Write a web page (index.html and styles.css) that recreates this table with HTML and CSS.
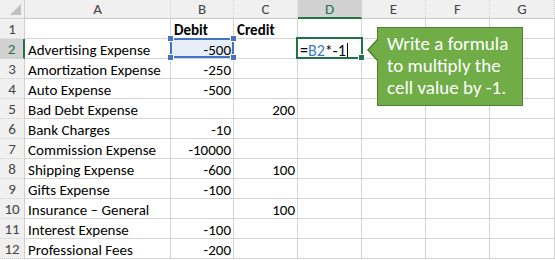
FILE: index.html
```html
<!DOCTYPE html>
<html lang="en">
<head>
  <meta charset="UTF-8" />
  <title>Expenses</title>
  <link rel="stylesheet" href="styles.css">
</head>
<body>

<div class="sheet" id="sheet">
  <div class="corner"></div>
  <div class="colhead">A</div>
  <div class="colhead">B</div>
  <div class="colhead">C</div>
  <div class="colhead active">D</div>
  <div class="colhead">E</div>
  <div class="colhead">F</div>
  <div class="colhead">G</div>
</div>

<!-- Note pointing at the edited cell -->
<div class="callout">Write a formula to multiply the cell value by -1.</div>

<script>
  const rows = [
    ["", "Debit", "Credit"],
    ["Advertising Expense", -500, ""],
    ["Amortization Expense", -250, ""],
    ["Auto Expense", -500, ""],
    ["Bad Debt Expense", "", 200],
    ["Bank Charges", -10, ""],
    ["Commission Expense", -10000, ""],
    ["Shipping Expense", -600, 100],
    ["Gifts Expense", -100, ""],
    ["Insurance – General", "", 100],
    ["Interest Expense", -100, ""],
    ["Professional Fees", -200, ""]
  ];

  const sheet = document.getElementById("sheet");

  function addCell(cls, text){
    const d = document.createElement("div");
    d.className = cls;
    if (text !== undefined && text !== "") d.textContent = text;
    sheet.appendChild(d);
    return d;
  }

  rows.forEach((r, i) => {
    const n = i + 1;
    addCell(n === 2 ? "rowhead active" : "rowhead", n);
    addCell("cell", r[0]);
    if (n === 1){
      addCell("cell bold", r[1]);
      addCell("cell bold", r[2]);
    } else {
      const b = addCell(n === 2 ? "cell num ref" : "cell num", r[1]);
      if (n === 2) ["tl","tr","bl","br"].forEach(c => { const h = document.createElement("span"); h.className = "handle " + c; b.appendChild(h); });
      addCell("cell num", r[2]);
    }
    const d = addCell(n === 2 ? "cell editing" : "cell");
    if (n === 2) d.innerHTML = '=<span class="ref-text">B2</span>*-1<span class="caret"></span><span class="fill"></span>';
    addCell("cell"); addCell("cell"); addCell("cell");
  });
</script>
</body>
</html>
```

FILE: styles.css
```css
body { margin: 0; background: white; font-family: Carlito, Lato, "Liberation Sans", sans-serif; position: relative; overflow: hidden; }
.sheet { display: grid; grid-template-columns: 25px 146px 63px 64px 64px 64px 64px 65px; grid-template-rows: 19px repeat(12, 20px); width: 555px; height: 260px; font-size: 15px; color: black; }
.sheet > div { box-sizing: border-box; border-right: 1px solid #d4d4d4; border-bottom: 1px solid #d4d4d4; white-space: nowrap; overflow: visible; line-height: 19px; }

/* headers */
.corner, .colhead, .rowhead { background: #f0f0f0; color: #444; border-color: #d0d0d0 !important; }
.corner { position: relative; }
.corner::after { content: ""; position: absolute; right: 3px; bottom: 3px; border-style: solid; border-width: 0 0 11px 11px; border-color: transparent transparent #c0c0c0 transparent; }
.colhead { text-align: center; line-height: 18px !important; border-right-style: dotted !important; border-bottom: 1px solid #c8c8c8 !important; }
.rowhead { text-align: center; padding-top: 1px; border-bottom-style: dotted !important; }
.colhead.active { background: #d2d2d2; color: #217346; border-bottom: 2px solid #217346 !important; }
.rowhead.active { background: #d2d2d2; color: #217346; border-right: 2px solid #217346 !important; }

/* cells */
.cell { padding: 2px 3px 0; }
.cell.bold { font-weight: bold; }
.cell.num { text-align: right; padding-right: 2px; }

/* referenced cell B2 */
.cell.ref { position: relative; background: #e8eef8; }
.cell.ref::before { content: ""; position: absolute; left: -1px; top: -1px; right: -1px; bottom: 0; border: 2px solid #4472c4; }
.handle { position: absolute; width: 5px; height: 5px; background: #4472c4; border: 1px solid white; }
.handle.tl { left: -4px; top: -4px; }
.handle.tr { right: -4px; top: -4px; }
.handle.bl { left: -4px; bottom: -3px; }
.handle.br { right: -4px; bottom: -3px; }

/* cell being edited */
.cell.editing { position: relative; padding-left: 2px; font-size: 16px; }
.cell.editing::before { content: ""; position: absolute; left: -2px; top: -2px; right: -2px; bottom: -1px; border: 2px solid #217346; }
.ref-text { color: #3a78d8; }
.caret { display: inline-block; width: 1px; height: 15px; background: black; vertical-align: -2px; margin-left: 1px; }
.fill { position: absolute; right: -4px; bottom: -3px; width: 5px; height: 5px; background: #217346; border: 1px solid white; }

/* callout */
.callout { position: absolute; left: 377px; top: 27px; width: 146px; height: 79px; box-sizing: border-box; background: #70ad47; border: 1px solid #507e32; color: white; font-size: 19px; line-height: 22px; padding: 5px 8px 0 9px; }
.callout::before { content: ""; position: absolute; left: -11px; top: 11px; border-style: solid; border-width: 11px 10px 11px 0; border-color: transparent #507e32 transparent transparent; }
.callout::after { content: ""; position: absolute; left: -9px; top: 12px; border-style: solid; border-width: 10px 9px 10px 0; border-color: transparent #70ad47 transparent transparent; }
```
